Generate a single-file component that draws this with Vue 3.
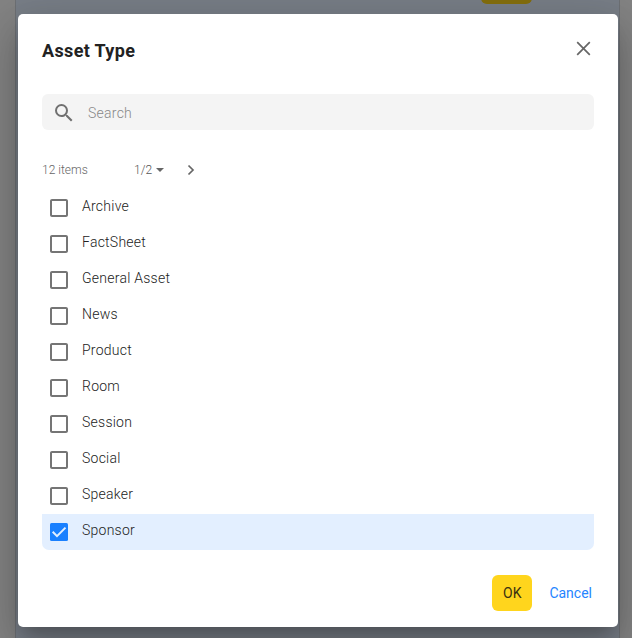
<script setup>
import { ref } from 'vue'

const items = ref([
  'Archive', 'FactSheet', 'General Asset', 'News', 'Product',
  'Room', 'Session', 'Social', 'Speaker', 'Sponsor',
].map((name) => ({ name, checked: name === 'Sponsor' })))
</script>

<template>
  <div class="page">
    <div class="backdrop-panel"><span class="backdrop-button"></span></div>
    <section class="dialog" role="dialog">
      <header class="header">
        <h1 class="title">Asset Type</h1>
        <button class="close" aria-label="Close">
          <svg width="15" height="15" viewBox="0 0 15 15"><path d="M1.2 1.2 13.8 13.8M13.8 1.2 1.2 13.8" fill="none" stroke="#666" stroke-width="1.7" /></svg>
        </button>
      </header>

      <label class="search">
        <svg class="glass" width="24" height="24" viewBox="0 0 24 24"><path fill="#707070" d="M15.5 14h-.79l-.28-.27A6.47 6.47 0 0 0 16 9.500 6.500 6.500 0 1 0 9.500 16c1.610 0 3.090-.59 4.230-1.570l.27.28v.79l5 4.990L20.490 19l-4.990-5zm-6 0A4.500 4.500 0 1 1 9.500 5a4.500 4.500 0 0 1 0 9z" /></svg>
        <span class="placeholder">Search</span>
      </label>

      <div class="pager">
        <span class="count">12 items</span>
        <span class="current">1/2</span>
        <svg class="caret" width="8" height="4" viewBox="0 0 8 4"><path d="M0 0h8L4 4z" fill="#666" /></svg>
        <svg class="next" width="8" height="12" viewBox="0 0 8 12"><path d="M1.500 1.500 6 6l-4.500 4.500" fill="none" stroke="#666" stroke-width="1.700" /></svg>
      </div>

      <ul class="list">
        <li v-for="item in items" :key="item.name" class="row" :class="{ selected: item.checked }" @click="item.checked = !item.checked">
          <svg class="box" width="24" height="24" viewBox="0 0 24 24">
            <path v-if="!item.checked" fill="#757575" d="M19 5v14H5V5h14m0-2H5c-1.100 0-2 .9-2 2v14c0 1.100.9 2 2 2h14c1.100 0 2-.9 2-2V5c0-1.100-.9-2-2-2z" />
            <template v-else>
              <rect x="3" y="3" width="18" height="18" rx="1.500" fill="#1a80ff" />
              <path d="m5.700 11.800 4.300 4.300L18.500 7.600" fill="none" stroke="#e3efff" stroke-width="2" />
            </template>
          </svg>
          <span class="label">{{ item.name }}</span>
        </li>
      </ul>

      <footer class="actions">
        <button class="ok">OK</button>
        <button class="cancel">Cancel</button>
      </footer>
    </section>
  </div>
</template>

<style>
body { margin: 0; overflow: hidden; }
</style>

<style scoped>
* { box-sizing: border-box; }
.page {
  position: relative;
  width: 632px;
  height: 638px;
  padding: 14px 14px 11px 18px;
  overflow: hidden;
  background: #838383;
  font-family: Roboto, "Liberation Sans", sans-serif;
  font-size: 14px;
  font-weight: 300;
  letter-spacing: .25px;
  color: #222;
}
.backdrop-panel {
  position: absolute;
  top: 0;
  bottom: 0;
  left: 15px;
  width: 605px;
  background: #787e87;
  border: solid #6d7074;
  border-width: 0 1px;
}
.backdrop-button {
  position: absolute;
  top: -32px;
  left: 465px;
  width: 51px;
  height: 36px;
  border-radius: 6px;
  background: #856f0d;
}
.dialog {
  position: relative;
  display: flex;
  flex-direction: column;
  width: 600px;
  height: 613px;
  padding: 0 24px;
  background: #fff;
  border-radius: 5px;
  box-shadow: 0 11px 15px -7px rgba(0, 0, 0, .2), 0 24px 38px 3px rgba(0, 0, 0, .14), 0 9px 46px 8px rgba(0, 0, 0, .12);
}
.header {
  display: flex;
  justify-content: space-between;
  height: 80px;
  padding-top: 26px;
}
.title {
  margin: 0;
  font-size: 18px;
  line-height: 22px;
  font-weight: 700;
  letter-spacing: .35px;
  color: #222;
}
button {
  padding: 0;
  border: 0;
  background: none;
  font: inherit;
  letter-spacing: inherit;
}
.close {
  width: 15px;
  height: 15px;
  margin: 1px 3px 0 0;
}
.close svg { display: block; }
.search {
  display: flex;
  align-items: center;
  height: 36px;
  padding-left: 10px;
  gap: 12px;
  border-radius: 6px;
  background: #f4f4f4;
}
.glass { margin-top: 1px; }
.placeholder { color: #888; padding-top: 1px; }
.pager {
  display: flex;
  align-items: center;
  height: 20px;
  margin-top: 30px;
  font-size: 12px;
  letter-spacing: 0;
  color: #666;
}
.count { width: 92px; }
.current { width: 22px; color: #555; }
.next { margin-left: 23px; }
.list {
  margin: 10px 0 0;
  padding: 0;
  list-style: none;
}
.row {
  display: flex;
  height: 36px;
  padding-left: 5px;
  border-radius: 0 0 7px 7px;
}
.row.selected { background: #e3efff; }
.box { margin-top: 6px; }
.label {
  margin-left: 11px;
  line-height: 33px;
}
.actions {
  display: flex;
  justify-content: flex-end;
  margin-top: 25px;
  padding-right: 2px;
  gap: 17px;
}
.ok {
  width: 40px;
  height: 36px;
  border-radius: 6px;
  background: #ffd51d;
  color: #3a3110;
  font-weight: 400;
}
.cancel { color: #2585ff; font-weight: 400; letter-spacing: 0; }
</style>
